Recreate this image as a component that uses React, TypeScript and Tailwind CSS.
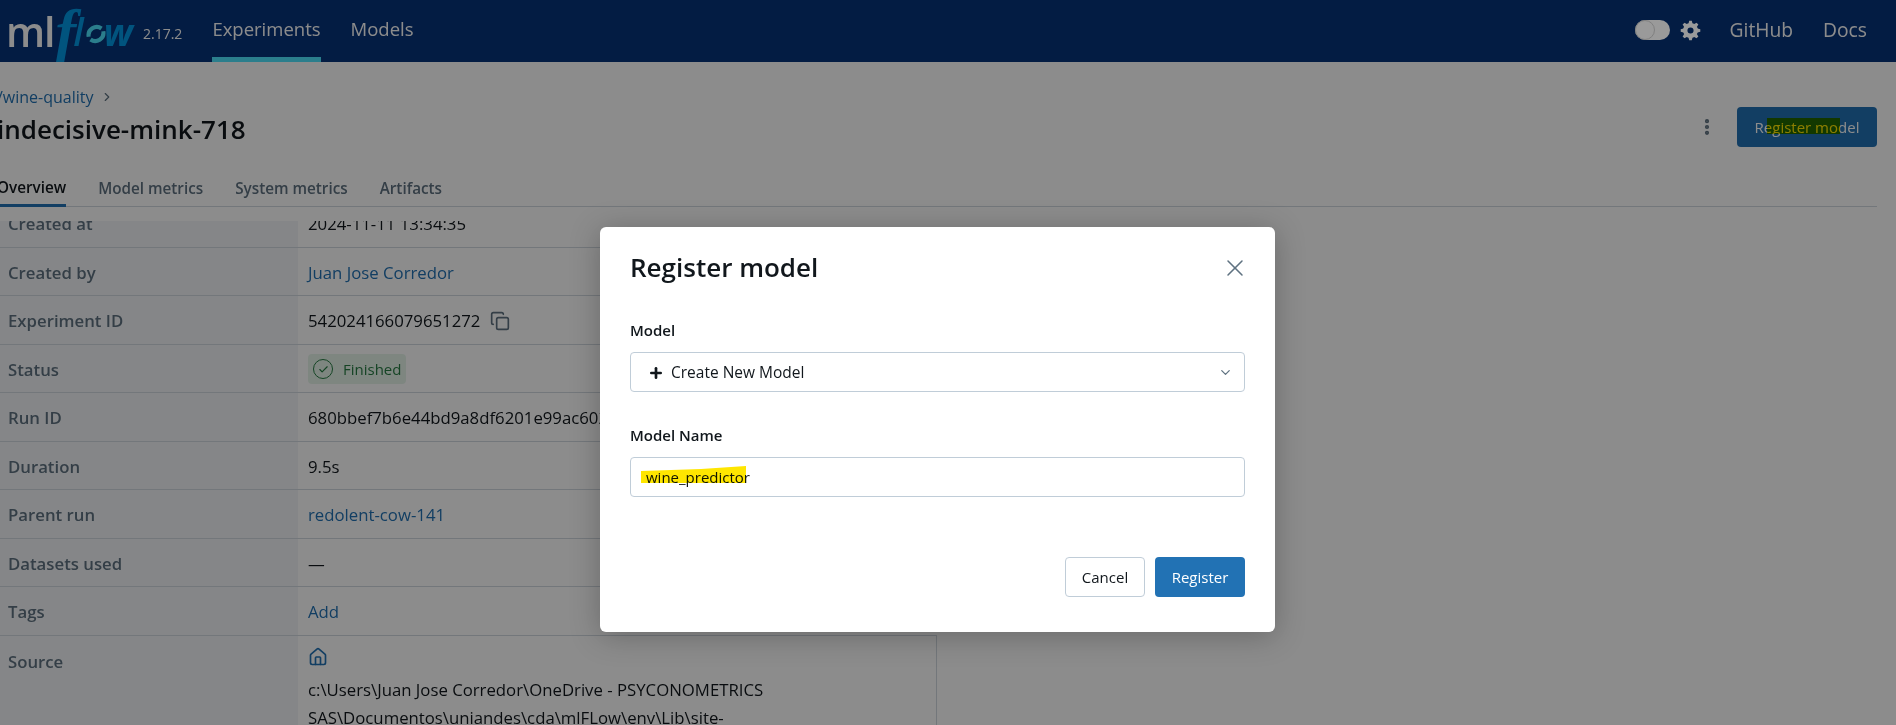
import { Check, ChevronDown, ChevronRight, Copy, Home, MoreVertical, Plus, X } from 'lucide-react'
import type { ReactNode } from 'react'

const FONT = "font-['Open_Sans','Noto_Sans',sans-serif]"

const linkCls = 'text-[#2272b4]'

const rows: Array<{ label: string; value: ReactNode }> = [
  { label: 'Created at', value: '2024-11-11 13:34:35' },
  { label: 'Created by', value: <span className={linkCls}>Juan Jose Corredor</span> },
  {
    label: 'Experiment ID',
    value: (
      <span className="flex items-center gap-[10px]">
        542024166079651272
        <Copy size={20} className="text-[#5f7281]" />
      </span>
    ),
  },
  {
    label: 'Status',
    value: (
      <span className="flex h-[30px] w-[98px] items-center gap-[10px] rounded bg-[#e6f5ea] pl-[5px] text-[15px] text-[#277c43]">
        <span className="flex h-[20px] w-[20px] items-center justify-center rounded-full border-[1.75px] border-[#277c43]">
          <Check size={11} strokeWidth={2.5} />
        </span>
        Finished
      </span>
    ),
  },
  { label: 'Run ID', value: '680bbef7b6e44bd9a8df6201e99ac602' },
  { label: 'Duration', value: '9.5s' },
  { label: 'Parent run', value: <span className={linkCls}>redolent-cow-141</span> },
  { label: 'Datasets used', value: '—' },
  { label: 'Tags', value: <span className={linkCls}>Add</span> },
]

function Logo() {
  return (
    <div className="flex h-[62px] w-[136px] items-center overflow-hidden pl-[6px] text-[#0399e6]">
      <span className="text-[41px] leading-none font-semibold tracking-[-1px] text-white">ml</span>
      <span className="ml-[1px] font-['Liberation_Serif',serif] text-[62px] leading-none font-bold italic">f</span>
      <span className="ml-[-3px] text-[38px] leading-none font-semibold italic">l</span>
      <svg viewBox="0 0 24 24" className="mt-[6px] ml-[1px] h-[22px] w-[22px] shrink-0 text-[#4fe5ff]" fill="none" stroke="currentColor" strokeWidth="4.5">
        <path d="M4 15a9 9 0 0 1 14-9" />
        <path d="M20 9a9 9 0 0 1-14 9" />
      </svg>
      <span className="ml-[-3px] text-[37px] leading-none font-bold italic">w</span>
    </div>
  )
}

// the theme toggle's cog: eight short teeth round a ring
function ThemeCog() {
  return (
    <svg viewBox="0 0 24 24" className="relative z-20 ml-[10px] h-[21px] w-[21px] text-[#9a9a9a]" fill="currentColor">
      {[0, 45, 90, 135, 180, 225, 270, 315].map((a) => (
        <path key={a} d="M9.5 5 L10.5 0.8 H13.5 L14.5 5 Z" transform={`rotate(${a} 12 12)`} />
      ))}
      <circle cx="12" cy="12" r="6" fill="none" stroke="currentColor" strokeWidth="5" />
    </svg>
  )
}

export default function App() {
  return (
    <div className={`${FONT} relative isolate h-[725px] w-[1896px] overflow-hidden bg-white text-[16.75px] text-[#11171c]`}>
      <header className="flex h-[62px] items-stretch bg-[#07337a] text-white">
        <Logo />
        <span className="mt-[25px] ml-[7px] text-[14px] leading-[18px]">2.17.2</span>
        <nav className="ml-[30px] flex gap-[30px] text-[18.5px]">
          <a className="flex items-center border-b-[5px] border-[#4fe5ff] pt-[1px]">Experiments</a>
          <a className="flex items-center border-b-[5px] border-transparent pt-[1px]">Models</a>
        </nav>
        <div className="ml-auto flex items-center pr-[29px] pb-[2px] text-[19.25px]">
          <span className="relative z-20 flex h-[20px] w-[35px] rounded-full bg-[#9a9a9a]">
            <span className="h-[20px] w-[20px] rounded-full border border-[#808080]" />
          </span>
          <ThemeCog />
          <a className="ml-[29px]">GitHub</a>
          <a className="ml-[30px]">Docs</a>
        </div>
      </header>

      <main className="ml-[-3px] mr-[19px]">
        <div className="flex h-[100px] items-start justify-between">
          <div>
            <div className={`mt-[25px] flex items-center gap-[6px] text-[16px] leading-5 ${linkCls}`}>
              /wine-quality
              <ChevronRight size={14} className="text-[#5f7281]" />
            </div>
            <h1 className="mt-[4px] text-[26px] leading-9 font-semibold">indecisive-mink-718</h1>
          </div>
          <div className="mt-[45px] flex items-center gap-[20px]">
            <MoreVertical size={20} strokeWidth={3} className="text-[#5f7281]" />
            <button className="relative h-[40px] w-[140px] rounded bg-[#2272b4] text-[15px] text-white">
              Register model
              <span className="absolute top-[11px] left-[30px] h-[16px] w-[73px] bg-[#ffe600] mix-blend-multiply" />
            </button>
          </div>
        </div>

        <div className="flex h-[45px] gap-[32px] border-b border-[#d1d9e1] text-[15.25px] font-semibold text-[#5f7281]">
          <a className="-mb-px flex items-center border-b-[3px] border-[#2272b4] pt-[9px] text-[#11171c]">Overview</a>
          <a className="flex items-center pt-[9px]">Model metrics</a>
          <a className="flex items-center pt-[9px]">System metrics</a>
          <a className="flex items-center pt-[9px]">Artifacts</a>
        </div>
      </main>

      <div className="mt-[14px] h-[504px] w-[937px] overflow-hidden">
        <div className="mt-[-22px]">
          {rows.map((r) => (
            <div key={r.label} className="flex h-[48.5px] items-center border-b border-[#d1d9e1]">
              <div className="flex h-full w-[298px] items-center bg-[#f3f5f7] pt-[2px] pl-[8px] font-semibold text-[#5f7281]">{r.label}</div>
              <div className="flex h-full items-center pt-[2px] pl-[10px]">{r.value}</div>
            </div>
          ))}
          <div className="flex h-[150px] border-r border-[#d1d9e1]">
            <div className="flex h-full w-[298px] bg-[#f3f5f7] pt-[13px] pl-[8px] font-semibold text-[#5f7281]">Source</div>
            <div className="pt-[11px] pl-[10px] text-[16.75px] leading-[28px]">
              <Home size={20} className={linkCls} />
              <div className="mt-[9px] w-[500px]">
                c:\Users\Juan Jose Corredor\OneDrive - PSYCONOMETRICS
                <br />
                SAS\Documentos\uniandes\cda\mlFLow\env\Lib\site-
              </div>
            </div>
          </div>
        </div>
      </div>

      {/* backdrop + dialog */}
      <div className="absolute inset-0 bg-black/45" />
      <div className="absolute top-[227px] left-[600px] flex h-[405px] w-[675px] flex-col rounded-md bg-white px-[30px] text-[15.5px] shadow-[0_4px_30px_rgba(0,0,0,0.25)]">
        <div className="flex h-[80px] items-center justify-between pt-[1px]">
          <h2 className="text-[26px] font-semibold">Register model</h2>
          <X size={28} strokeWidth={1.3} className="mr-[-4px] text-[#5f7281]" />
        </div>
        <label className="mt-[13px] text-[15px] leading-5 font-semibold">Model</label>
        <div className="mt-[12px] flex h-[40px] items-center rounded border border-[#c0cdd8] pt-[1px] pr-[11px] pl-[17px]">
          <Plus size={16} strokeWidth={4} />
          <span className="ml-[7px]">Create New Model</span>
          <ChevronDown size={15} className="ml-auto text-[#5f7281]" />
        </div>
        <label className="mt-[33px] text-[15px] leading-5 font-semibold">Model Name</label>
        <div className="relative mt-[12px] flex h-[40px] items-center rounded border border-[#c0cdd8] pl-[15px] text-[15px]">
          wine_predictor
          <svg viewBox="0 0 105 17" className="absolute top-[8px] left-[10px] h-[17px] w-[105px] mix-blend-multiply">
            <path d="M0 5 L60 3 L105 0 V17 H0 Z" fill="#ffe600" />
          </svg>
        </div>
        <div className="mt-[60px] flex justify-end gap-[10px] text-[15px]">
          <button className="h-[40px] w-[80px] rounded border border-[#c0cdd8] pt-[1px]">Cancel</button>
          <button className="h-[40px] w-[90px] rounded bg-[#2272b4] pt-[1px] text-white">Register</button>
        </div>
      </div>
    </div>
  )
}
